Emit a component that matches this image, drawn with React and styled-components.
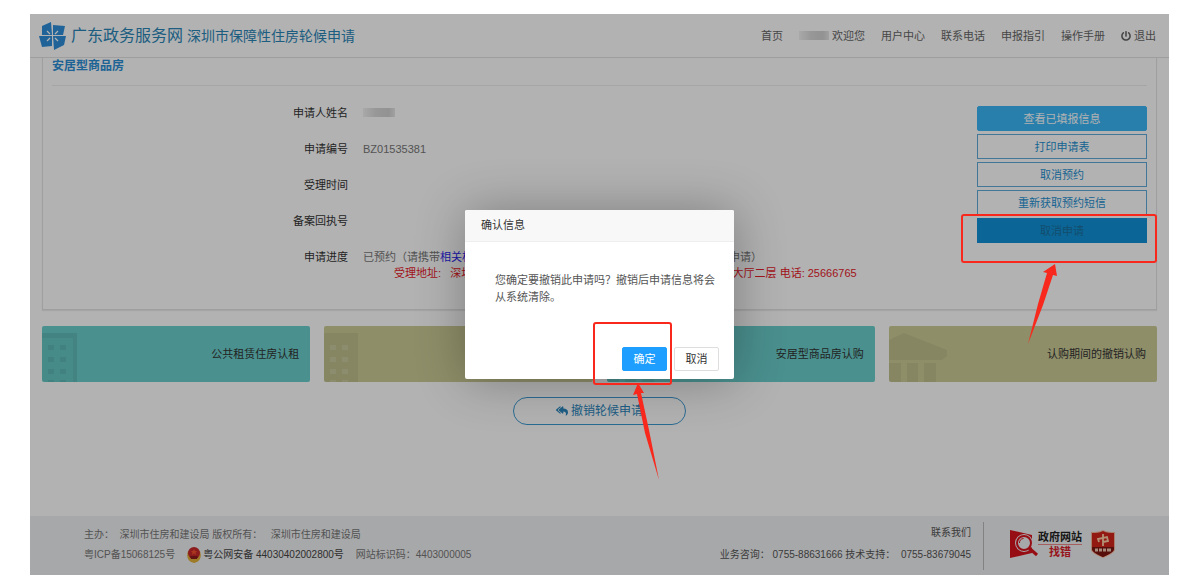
import React from 'react'
import styled, { createGlobalStyle } from 'styled-components'
import { FaPowerOff, FaReplyAll } from 'react-icons/fa'

const GlobalStyle = createGlobalStyle`
  * {
    box-sizing: border-box;
  }
  body {
    margin: 0;
    background: #fff;
    color: #333;
    font: 11px/16px "Liberation Sans", "Noto Sans CJK SC", sans-serif;
  }
  button {
    font: inherit;
    cursor: pointer;
  }
  a {
    color: inherit;
    text-decoration: none;
  }
`

const Page = styled.div`
  position: relative;
  display: flex;
  flex-direction: column;
  min-height: calc(100vh - 26px);
  margin: 14px 31px 12px 30px;
  background: #fff;
`

const Header = styled.header`
  display: flex;
  align-items: center;
  justify-content: space-between;
  height: 44px;
  padding: 0 13px 0 9px;
  border-bottom: 1px solid #e2e2e2;
`
const Brand = styled.div`
  display: flex;
  align-items: center;
  gap: 4px;
  color: #2a86b8;
`
const SiteName = styled.span`
  font-size: 16px;
  line-height: 24px;
`
const SystemName = styled.span`
  font-size: 14px;
  line-height: 24px;
`
const Nav = styled.nav`
  display: flex;
  align-items: center;
  gap: 16px;
  color: #666;
`
const NavLink = styled.a`
  display: flex;
  align-items: center;
  gap: 3px;
`
const Mosaic = styled.span`
  display: inline-block;
  width: ${({ $width }) => $width}px;
  height: 9px;
  background: linear-gradient(90deg, #f2f2f2, #d9d9d9 40%, #d2d2d2 80%, #e6e6e6);
`

const Card = styled.section`
  margin: 0 12px;
  padding: 0 9px 18px;
  border: 1px solid #e4e4e4;
  border-top: 0;
  box-shadow: 0 1px 1px rgba(0, 0, 0, 0.08);
`
const CardTitle = styled.h2`
  margin: 0;
  padding-bottom: 11px;
  border-bottom: 1px solid #ececec;
  color: #2b8fd6;
  font-size: 12px;
  line-height: 16px;
`
const CardBody = styled.div`
  display: flex;
`
const Fields = styled.dl`
  flex: 1;
  margin: 0;
  padding-top: 9px;
`
const Field = styled.div`
  display: flex;
  gap: 15px;
  padding: 10px 0;
`
const FieldName = styled.dt`
  width: 32%;
  text-align: right;
`
const FieldValue = styled.dd`
  flex: 1;
  min-height: 16px;
  margin: 0;
  color: #777;
  white-space: nowrap;
`
const Material = styled.a`
  color: #2a1ef0;
`
const Address = styled.div`
  padding-left: 31px;
  color: #e8202a;
`
const Actions = styled.div`
  display: flex;
  flex-direction: column;
  gap: 3px;
  width: 170px;
  padding-top: 20px;
`
const looks = {
  solid: 'background: #3cb7f7; border-color: #3cb7f7; border-radius: 2px; color: #fff;',
  outline: 'background: #fff; border-color: #5fabd8; color: #2390d2;',
  active: 'background: #1093d8; border-color: #1093d8; color: #1b6f9f;',
}
const ActionButton = styled.button`
  width: 100%;
  height: 25px;
  padding: 0;
  border: 1px solid;
  ${({ $look }) => looks[$look]}
`

const Tiles = styled.div`
  display: grid;
  grid-template-columns: repeat(4, 1fr);
  gap: 14px;
  margin: 16px 12px 0;
`
const Tile = styled.a`
  display: flex;
  align-items: center;
  justify-content: space-between;
  height: 56px;
  padding-right: 11px;
  border-radius: 2px;
  background: ${({ $color }) => $color};
  overflow: hidden;
  svg {
    align-self: flex-end;
  }
`
const RevokeButton = styled.button`
  display: flex;
  align-items: center;
  align-self: center;
  justify-content: center;
  gap: 3px;
  width: 173px;
  height: 28px;
  margin-top: 15px;
  border: 1px solid #3d9bd2;
  border-radius: 14px;
  background: #fff;
  color: #2a86bd;
  font-size: 12px;
`

const Footer = styled.footer`
  display: flex;
  align-items: center;
  height: 60px;
  margin-top: auto;
  padding: 0 54px;
  border-top: 1px solid #fff;
  background: #f0f1f3;
  color: #777;
  font-size: 10px;
  line-height: 20px;
`
const Legal = styled.div`
  flex: 1;
  padding-bottom: 2px;
  white-space: pre;
`
const LegalRow = styled.div`
  display: flex;
  align-items: center;
  gap: 12px;
`
const Police = styled.a`
  display: flex;
  align-items: center;
  gap: 2px;
  color: #444;
`
const Contact = styled.div`
  padding: 0 12px 4px 0;
  border-right: 1px solid #bbb;
  color: #555;
  line-height: 22px;
  text-align: right;
  white-space: pre;
`
const Badges = styled.div`
  display: flex;
  align-items: center;
  gap: 9px;
  padding: 0 0 3px 26px;
`
const ReportLink = styled.a`
  display: flex;
  align-items: center;
`
const ReportText = styled.span`
  color: #222;
  font-size: 11px;
  font-weight: bold;
  line-height: 14px;
  text-align: center;
`
const ReportAction = styled.span`
  display: block;
  border-top: 1px solid #e88;
  color: #d8202a;
`

const Shade = styled.div`
  position: absolute;
  inset: 0;
  z-index: 2;
  display: flex;
  align-items: center;
  justify-content: center;
  background: rgba(0, 0, 0, 0.3);
`
const Dialog = styled.div`
  width: 269px;
  border-radius: 2px;
  background: #fff;
  box-shadow: 1px 1px 50px rgba(0, 0, 0, 0.3);
`
const DialogTitle = styled.h3`
  margin: 0;
  padding: 0 16px;
  border-bottom: 1px solid #eee;
  border-radius: 2px 2px 0 0;
  background: #f8f8f8;
  font-size: 11px;
  font-weight: normal;
  line-height: 31px;
`
const DialogText = styled.p`
  margin: 0;
  padding: 30px 18px 41px 30px;
  color: #555;
  line-height: 17px;
`
const DialogButtons = styled.div`
  display: flex;
  justify-content: flex-end;
  gap: 7px;
  padding: 0 15px 8px;
`
const DialogButton = styled.button`
  width: 45px;
  height: 24px;
  padding: 0;
  border: 1px solid ${({ $primary }) => ($primary ? '#1e9fff' : '#dedede')};
  border-radius: 2px;
  background: ${({ $primary }) => ($primary ? '#1e9fff' : '#fff')};
  color: ${({ $primary }) => ($primary ? '#fff' : '#333')};
`

// red guide marks drawn over the control they wrap
const Marked = styled.div`
  position: relative;
  display: flex;
`
const MarkBox = styled.span`
  position: absolute;
  inset: ${({ $inset }) => $inset};
  z-index: 3;
  border: 2px solid #f8281c;
  border-radius: 3px;
  pointer-events: none;
`
const MarkArrow = styled.svg`
  position: absolute;
  top: 100%;
  left: ${({ $left }) => $left}px;
  fill: #f8281c;
`

const Logo = () => (
  <svg width="28" height="28" viewBox="0 0 28 28">
    <g fill="#2f8fdb">
      <path d="M3 4 12 0l1 13H3z" />
      <path d="M14 3 26 4l-2 9H14z" />
      <path d="M0 14h13v10L3 25z" />
      <path d="M14 14h13l-2 9-10 5z" />
    </g>
    <path d="m8 9 3 3m8-3-3 3m-8 7 3-3m8 3-3-3" stroke="#fff" strokeWidth="1.200" />
    <path d="M13.500 6v16M6 13.500h15" stroke="#fff" />
  </svg>
)

const Building = () => (
  <svg width="36" height="49" viewBox="0 0 36 49" fill="#000">
    <path d="M0 0h35v49h-4V5H0z" opacity=".08" />
    <path d="M0 5h31v44H0z" opacity=".03" />
    <path d="M6 12h6v5H6zM18 12h6v5h-6zM6 24h6v5H6zM18 24h6v5h-6zM6 36h6v5H6zM18 36h6v5h-6zM6 47h6v2H6zM18 47h6v2h-6z" opacity=".07" />
  </svg>
)

const Block = () => (
  <svg width="36" height="49" viewBox="0 0 36 49">
    <path d="M0 0h34v49H0z" opacity=".06" />
    <path d="M6 12h6v5H6zM18 12h6v5h-6zM6 24h6v5H6zM18 24h6v5h-6zM6 36h6v5H6zM18 36h6v5h-6zM6 47h6v2H6zM18 47h6v2h-6z" fill="#fff" opacity=".14" />
  </svg>
)

const Hall = () => (
  <svg width="60" height="49" viewBox="0 0 60 49" opacity=".05">
    <path d="M0 7 15 0l43 17v6l-5 4H0zM0 30h12v19H0zM18 30h11v19H18zM35 30h12v19H35z" />
  </svg>
)

const PoliceBadge = () => (
  <svg width="14" height="16" viewBox="0 0 14 16">
    <path d="M1 4C-1 10 1 15 7 16c6-1 8-6 6-12z" fill="#e2b13c" />
    <circle cx="7" cy="6" r="6" fill="#c8282a" />
    <path d="m7 2 1 2h2L8.500 5.500 9 8 7 6.500 5 8l.5-2.500L4 4h2z" fill="#f4502c" />
    <path d="M3 9h8l-1 3H4z" fill="#8e1a1c" />
  </svg>
)

const FindError = () => (
  <svg width="28" height="28" viewBox="0 0 28 28">
    <path d="M0 0 22 5v18L0 28z" fill="#d8141e" />
    <circle cx="14" cy="13" r="7" fill="#d8141e" stroke="#f0f1f3" strokeWidth="4" />
    <circle cx="14" cy="13" r="7" fill="#f0f1f3" stroke="#d8141e" strokeWidth="2" />
    <path d="M9.500 13a4.500 4.500 0 0 1 4-4.500" fill="none" stroke="#d8141e" />
    <path d="m19 18 8 7" stroke="#d8141e" strokeWidth="3" />
  </svg>
)

const Shield = () => (
  <svg width="24" height="28" viewBox="0 0 24 28">
    <path d="M12 0c4 2 8 2 12 2v17c0 4-6 6-12 9C6 25 0 23 0 19V2c4 0 8 0 12-2z" fill="#f3b9a0" />
    <path d="M12 1c4 2 7 2 11 2v16c0 3-5 5-11 8C6 24 1 22 1 19V3c4 0 7 0 11-2z" fill="#d3241c" />
    <path d="M1 17h22v2c0 3-5 5-11 8C6 24 1 22 1 19z" fill="#7c1610" />
    <path d="M12 4v12M8 12l-1-3 9-2 1 4-5 1" fill="none" stroke="#ffd0a8" strokeWidth="1.800" />
    <path d="M4 20h3m1 0h3m1 0h3m1 0h4" stroke="#f0c8b4" strokeWidth="3" />
  </svg>
)

const links = ['用户中心', '联系电话', '申报指引', '操作手册']

const tiles = [
  { text: '公共租赁住房认租', color: '#6acfcc', Icon: Building },
  { text: '公共租赁住房退租', color: '#cccc97', Icon: Block },
  { text: '安居型商品房认购', color: '#6acfcc', Icon: Hall },
  { text: '认购期间的撤销认购', color: '#cccc97', Icon: Hall },
]

const App = () => (
  <Page>
    <GlobalStyle />
    <Header>
      <Brand>
        <Logo />
        <SiteName>广东政务服务网</SiteName>
        <SystemName>深圳市保障性住房轮候申请</SystemName>
      </Brand>
      <Nav>
        <NavLink href="#home">首页</NavLink>
        <NavLink href="#me"><Mosaic $width={30} />欢迎您</NavLink>
        {links.map((text) => (
          <NavLink href="#nav" key={text}>{text}</NavLink>
        ))}
        <NavLink href="#logout"><FaPowerOff size={10} />退出</NavLink>
      </Nav>
    </Header>

    <Card>
      <CardTitle>安居型商品房</CardTitle>
      <CardBody>
        <Fields>
          <Field>
            <FieldName>申请人姓名</FieldName>
            <FieldValue><Mosaic $width={32} /></FieldValue>
          </Field>
          <Field>
            <FieldName>申请编号</FieldName>
            <FieldValue>BZ01535381</FieldValue>
          </Field>
          <Field>
            <FieldName>受理时间</FieldName>
            <FieldValue />
          </Field>
          <Field>
            <FieldName>备案回执号</FieldName>
            <FieldValue />
          </Field>
          <Field>
            <FieldName>申请进度</FieldName>
            <FieldValue>
              已预约（请携带<Material href="#material">相关材料</Material> 原件及复印件于预约时间到受理地址现场提交轮候申请）
              <Address>受理地址: &nbsp; 深圳市福田区振华路设计大厦102楼住房和建设局住房保障大厅二层 电话: 25666765</Address>
            </FieldValue>
          </Field>
        </Fields>
        <Actions>
          <ActionButton $look="solid">查看已填报信息</ActionButton>
          <ActionButton $look="outline">打印申请表</ActionButton>
          <ActionButton $look="outline">取消预约</ActionButton>
          <ActionButton $look="outline">重新获取预约短信</ActionButton>
          <Marked>
            <ActionButton $look="active">取消申请</ActionButton>
            <MarkBox $inset="-4px -10px -20px -16px">
              <MarkArrow $left={64} width="30" height="84" viewBox="0 0 30 84">
                <path d="M28 3 30 15l-4-1L16 44 1 83 11 43 20 12l-4-1z" />
              </MarkArrow>
            </MarkBox>
          </Marked>
        </Actions>
      </CardBody>
    </Card>

    <Tiles>
      {tiles.map(({ text, color, Icon }) => (
        <Tile href="#tile" key={text} $color={color}>
          <Icon />
          {text}
        </Tile>
      ))}
    </Tiles>

    <RevokeButton><FaReplyAll size={12} />撤销轮候申请</RevokeButton>

    <Footer>
      <Legal>
        <div>主办：  深圳市住房和建设局 版权所有：   深圳市住房和建设局</div>
        <LegalRow>
          <span>粤ICP备15068125号</span>
          <Police href="#police"><PoliceBadge />粤公网安备 44030402002800号</Police>
          <span>网站标识码：4403000005</span>
        </LegalRow>
      </Legal>
      <Contact>
        <div>联系我们</div>
        <div>业务咨询： 0755-88631666 技术支持：  0755-83679045</div>
      </Contact>
      <Badges>
        <ReportLink href="#report">
          <FindError />
          <ReportText>政府网站<ReportAction>找错</ReportAction></ReportText>
        </ReportLink>
        <Shield />
      </Badges>
    </Footer>

    <Shade>
      <Dialog role="dialog" aria-labelledby="confirm-title">
        <DialogTitle id="confirm-title">确认信息</DialogTitle>
        <DialogText>您确定要撤销此申请吗？撤销后申请信息将会从系统清除。</DialogText>
        <DialogButtons>
          <Marked>
            <DialogButton $primary>确定</DialogButton>
            <MarkBox $inset="-25px -5px -14px -29px">
              <MarkArrow $left={38} width="28" height="98" viewBox="0 0 28 98">
                <path d="M5 0 11 10H8l8 37 10 50L12 50 4 11l-4 1z" />
              </MarkArrow>
            </MarkBox>
          </Marked>
          <DialogButton>取消</DialogButton>
        </DialogButtons>
      </Dialog>
    </Shade>
  </Page>
)

export default App
